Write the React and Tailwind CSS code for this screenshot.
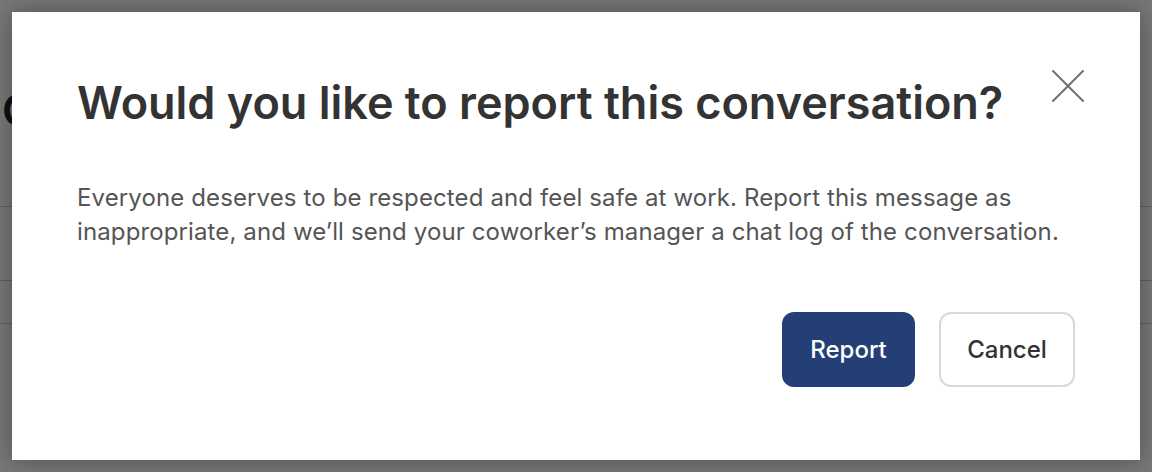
import React from 'react';

function CloseIcon() {
  return (
    <svg width="32" height="32" viewBox="0 0 32 32" fill="none" stroke="#707070" strokeWidth="2" strokeLinecap="round">
      <path d="M1 1L31 31M31 1L1 31" />
    </svg>
  );
}

export default function App() {
  return (
    <div className="relative w-[1152px] h-[472px] overflow-hidden bg-white font-['Inter',sans-serif]">
      {/* page behind the dialog */}
      <div className="flex flex-col">
        <div className="h-[207px] border-b border-[#ccc] pt-[84px] pl-[2px] text-[44px] font-semibold text-[#222] leading-[52px]">
          Co
        </div>
        <div className="h-[74px] border-b border-[#ccc]" />
        <div className="h-[43px] border-b border-[#ccc]" />
      </div>

      {/* overlay */}
      <div className="absolute inset-0 bg-[rgba(0,0,0,0.53)] p-3">
        <div className="relative h-[448px] bg-white shadow-[0_0_24px_rgba(0,0,0,0.35)] pt-[65px] pl-[65px] pr-[65px]">
          <button className="absolute top-[58px] right-[56px]">
            <CloseIcon />
          </button>
          <h1 className="text-[45px] leading-[52px] font-semibold text-[#333]">
            Would you like to report this conversation?
          </h1>
          <p className="mt-[52px] text-[24px] leading-[34px] tracking-[0.005em] text-[#555] max-w-[1000px]">
            Everyone deserves to be respected and feel safe at work. Report this message as inappropriate, and we’ll send your coworker’s manager a chat log of the conversation.
          </p>
          <div className="mt-[63px] flex justify-end gap-6">
            <button className="h-[75px] w-[133px] rounded-xl bg-[#233f75] text-white text-[24px] font-medium">
              Report
            </button>
            <button className="h-[75px] w-[136px] rounded-xl border-2 border-[#d9d9d9] bg-white text-[#333] text-[24px] font-medium">
              Cancel
            </button>
          </div>
        </div>
      </div>
    </div>
  );
}
